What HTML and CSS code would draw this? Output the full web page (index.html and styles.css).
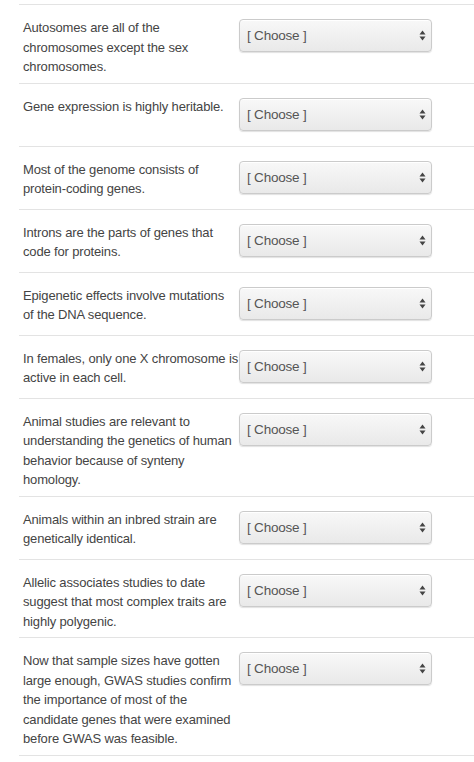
FILE: index.html
```html
<!DOCTYPE html>
<html lang="en">
<head>
<meta charset="utf-8">
<title>Matching questions</title>
<link rel="stylesheet" href="styles.css">
</head>
<body>
<div class="list">
  <div class="row"><div class="q">Autosomes are all of the chromosomes except the sex chromosomes.</div><div class="sel"><select class="answer"><option>[ Choose ]</option></select><svg class="arrows" width="7" height="11" viewBox="0 0 7 11"><path d="M3.5 0.5L6.5 4.5H0.5Z M3.5 10.5L6.5 6.5H0.5Z" fill="#444"/></svg></div></div>
  <div class="row"><div class="q">Gene expression is highly heritable.</div><div class="sel"><select class="answer"><option>[ Choose ]</option></select><svg class="arrows" width="7" height="11" viewBox="0 0 7 11"><path d="M3.5 0.5L6.5 4.5H0.5Z M3.5 10.5L6.5 6.5H0.5Z" fill="#444"/></svg></div></div>
  <div class="row"><div class="q">Most of the genome consists of protein-coding genes.</div><div class="sel"><select class="answer"><option>[ Choose ]</option></select><svg class="arrows" width="7" height="11" viewBox="0 0 7 11"><path d="M3.5 0.5L6.5 4.5H0.5Z M3.5 10.5L6.5 6.5H0.5Z" fill="#444"/></svg></div></div>
  <div class="row"><div class="q">Introns are the parts of genes that code for proteins.</div><div class="sel"><select class="answer"><option>[ Choose ]</option></select><svg class="arrows" width="7" height="11" viewBox="0 0 7 11"><path d="M3.5 0.5L6.5 4.5H0.5Z M3.5 10.5L6.5 6.5H0.5Z" fill="#444"/></svg></div></div>
  <div class="row"><div class="q">Epigenetic effects involve mutations of the DNA sequence.</div><div class="sel"><select class="answer"><option>[ Choose ]</option></select><svg class="arrows" width="7" height="11" viewBox="0 0 7 11"><path d="M3.5 0.5L6.5 4.5H0.5Z M3.5 10.5L6.5 6.5H0.5Z" fill="#444"/></svg></div></div>
  <div class="row"><div class="q">In females, only one X chromosome is active in each cell.</div><div class="sel"><select class="answer"><option>[ Choose ]</option></select><svg class="arrows" width="7" height="11" viewBox="0 0 7 11"><path d="M3.5 0.5L6.5 4.5H0.5Z M3.5 10.5L6.5 6.5H0.5Z" fill="#444"/></svg></div></div>
  <div class="row"><div class="q">Animal studies are relevant to understanding the genetics of human behavior because of synteny homology.</div><div class="sel"><select class="answer"><option>[ Choose ]</option></select><svg class="arrows" width="7" height="11" viewBox="0 0 7 11"><path d="M3.5 0.5L6.5 4.5H0.5Z M3.5 10.5L6.5 6.5H0.5Z" fill="#444"/></svg></div></div>
  <div class="row"><div class="q">Animals within an inbred strain are genetically identical.</div><div class="sel"><select class="answer"><option>[ Choose ]</option></select><svg class="arrows" width="7" height="11" viewBox="0 0 7 11"><path d="M3.5 0.5L6.5 4.5H0.5Z M3.5 10.5L6.5 6.5H0.5Z" fill="#444"/></svg></div></div>
  <div class="row"><div class="q">Allelic associates studies to date suggest that most complex traits are highly polygenic.</div><div class="sel"><select class="answer"><option>[ Choose ]</option></select><svg class="arrows" width="7" height="11" viewBox="0 0 7 11"><path d="M3.5 0.5L6.5 4.5H0.5Z M3.5 10.5L6.5 6.5H0.5Z" fill="#444"/></svg></div></div>
  <div class="row"><div class="q">Now that sample sizes have gotten large enough, GWAS studies confirm the importance of most of the candidate genes that were examined before GWAS was feasible.</div><div class="sel"><select class="answer"><option>[ Choose ]</option></select><svg class="arrows" width="7" height="11" viewBox="0 0 7 11"><path d="M3.5 0.5L6.5 4.5H0.5Z M3.5 10.5L6.5 6.5H0.5Z" fill="#444"/></svg></div></div>
</div>
</body>
</html>
```
FILE: styles.css
```css
html, body {
  margin: 0;
  padding: 0;
  background: #ffffff;
}
body {
  font-family: "Liberation Sans", Arial, Helvetica, sans-serif;
  color: #444444;
  font-size: 13px;
  letter-spacing: -0.15px;
  line-height: 19.5px;
}
.list {
  margin-top: 4px;
  margin-left: 19px;
  border-top: 1px solid #e3e3e3;
}
.row {
  display: flex;
  align-items: flex-start;
  padding: 13px 0 6px 4px;
  border-bottom: 1px solid #e3e3e3;
}
.q {
  width: 215px;
  flex: none;
}
.sel {
  position: relative;
  margin: 1px 0 9px 1px;
  width: 193px;
  height: 33px;
  flex: none;
}
.answer {
  -webkit-appearance: none;
  appearance: none;
  display: block;
  width: 193px;
  height: 33px;
  margin: 0;
  padding: 0 0 0 7px;
  border: 1px solid #cbcbcb;
  border-radius: 4px;
  background: linear-gradient(#f8f8f8, #e9e9e9);
  box-shadow: 0 1px 1px rgba(0, 0, 0, 0.12), inset 0 1px 0 #ffffff;
  font-family: "Liberation Sans", Arial, Helvetica, sans-serif;
  font-size: 13.5px;
  letter-spacing: -0.2px;
  color: #555555;
  outline: none;
}
.arrows {
  position: absolute;
  right: 6px;
  top: 11px;
  pointer-events: none;
}
```
